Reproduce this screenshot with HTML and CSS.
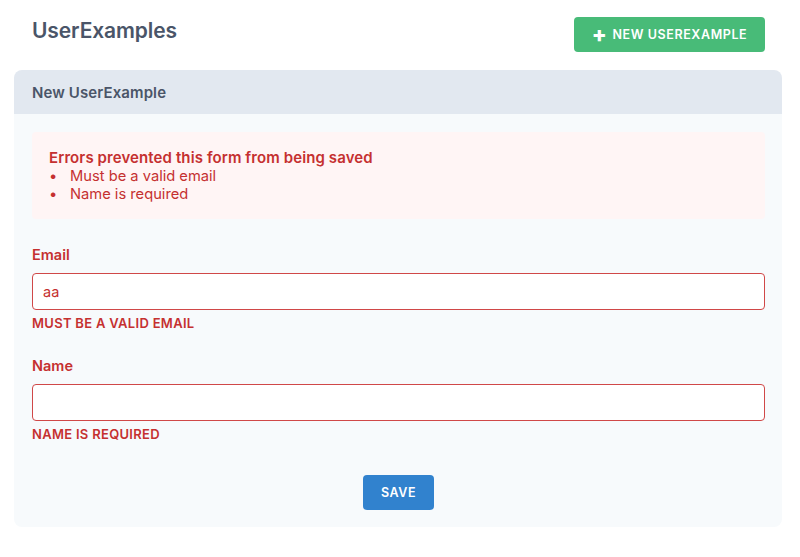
FILE: index.html
```html
<!DOCTYPE html>
<html lang="en">
<head>
<meta charset="utf-8">
<title>UserExamples</title>
<link rel="stylesheet" href="styles.css">
</head>
<body>
<div class="scaffold">
  <header class="header">
    <h1 class="heading-primary">UserExamples</h1>
    <a class="button button-green" href="#"><span class="button-icon">+</span>New UserExample</a>
  </header>
  <main class="main">
    <div class="segment">
      <div class="segment-header">
        <h2 class="heading-secondary">New UserExample</h2>
      </div>
      <div class="segment-main">
        <form class="form">
          <div class="form-error">
            <p class="form-error-title">Errors prevented this form from being saved</p>
            <ul class="form-error-list">
              <li>Must be a valid email</li>
              <li>Name is required</li>
            </ul>
          </div>
          <label class="label label-first">Email</label>
          <input class="input" type="text" value="aa">
          <span class="field-error">Must be a valid email</span>
          <label class="label">Name</label>
          <input class="input" type="text" value="">
          <span class="field-error">Name is required</span>
          <div class="button-group">
            <button class="button button-blue" type="button">Save</button>
          </div>
        </form>
      </div>
    </div>
  </main>
</div>
</body>
</html>
```

FILE: styles.css
```css
* { box-sizing: border-box; }
html, body { margin: 0; padding: 0; background: #fff; }
body {
  font-family: Inter, "Liberation Sans", Arial, sans-serif;
  color: #4a5568;
}
.header {
  display: flex;
  justify-content: space-between;
  align-items: flex-start;
  padding: 17px 35px 18px 32px;
}
.heading-primary {
  margin: 0;
  font-size: 21px;
  font-weight: 600;
  line-height: 28px;
  color: #4a5568;
  letter-spacing: -0.1px;
}
.button {
  display: inline-flex;
  align-items: center;
  justify-content: center;
  height: 35px;
  padding: 0;
  border: none;
  border-radius: 4px;
  font-family: inherit;
  font-size: 12.5px;
  font-weight: 600;
  text-transform: uppercase;
  letter-spacing: 0.6px;
  white-space: nowrap;
  color: #fff;
  text-decoration: none;
}
.button-green { background: #48bb78; width: 191px; }
.button-blue { background: #3182ce; width: 71px; }
.button-icon {
  font-size: 22px;
  font-weight: 800;
  line-height: 16px;
  margin-right: 5px;
  margin-top: -2px;
}
.main { margin: 0 18px 0 14px; }
.segment {
  border-radius: 8px;
  overflow: hidden;
}
.segment-header {
  background: #e2e8f0;
  height: 44px;
  display: flex;
  align-items: center;
  padding: 0 18px;
}
.heading-secondary {
  margin: 0;
  font-size: 15px;
  font-weight: 600;
  color: #4a5568;
  letter-spacing: 0.1px;
}
.segment-main {
  background: #f7fafc;
  padding: 18px 17px 17px 18px;
}
.form { display: flex; flex-direction: column; font-size: 14px; }
.form-error {
  background: #fff5f5;
  color: #c53030;
  border-radius: 4px;
  padding: 16px 17px;
}
.form-error-title {
  margin: 0;
  font-weight: 600;
  font-size: 15px;
  line-height: 20px;
  letter-spacing: 0.1px;
}
.form-error-list {
  margin: -1px 0 0;
  padding: 0;
  list-style: none;
  font-size: 14.7px;
  line-height: 18px;
}
.form-error-list li::before {
  content: "\2022";
  display: inline-block;
  width: 21px;
}
.label {
  display: block;
  margin-top: 25px;
  font-weight: 600;
  font-size: 14.5px;
  line-height: 20px;
  color: #c53030;
}
.label-first { margin-top: 26px; }
.input {
  display: block;
  margin-top: 8px;
  width: 100%;
  height: 37px;
  padding: 0 10px;
  border: 1px solid #d04848;
  border-radius: 4px;
  background: #fff;
  color: #c53030;
  font-family: inherit;
  font-size: 14.5px;
  outline: none;
}
.field-error {
  display: block;
  margin-top: 5px;
  font-size: 13px;
  line-height: 16px;
  font-weight: 600;
  text-transform: uppercase;
  letter-spacing: 0.3px;
  color: #c53030;
}
.button-group {
  display: flex;
  justify-content: center;
  margin-top: 33px;
}
```
